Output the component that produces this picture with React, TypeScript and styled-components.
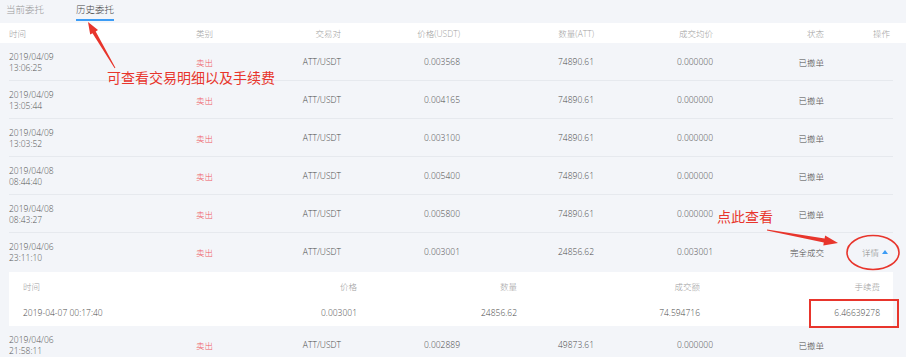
import styled, { createGlobalStyle } from 'styled-components';

const GlobalStyle = createGlobalStyle`
  html, body {
    margin: 0;
    padding: 0;
    background: #f3f5f9;
    font-family: "Open Sans", "Noto Sans CJK SC", sans-serif;
    color: #333;
  }
`;

const COLS = '141px 63px 128px 119px 134px 119px 111px 66px';
const DETAIL_COLS = '177px 157px 160px 183px 180px';

type Order = {
  date: string;
  time: string;
  price: string;
  amount: string;
  avg: string;
  status: string;
  open?: boolean;
};

const orders: Order[] = [
  { date: '2019/04/09', time: '13:06:25', price: '0.003568', amount: '74890.61', avg: '0.000000', status: '已撤单' },
  { date: '2019/04/09', time: '13:05:44', price: '0.004165', amount: '74890.61', avg: '0.000000', status: '已撤单' },
  { date: '2019/04/09', time: '13:03:52', price: '0.003100', amount: '74890.61', avg: '0.000000', status: '已撤单' },
  { date: '2019/04/08', time: '08:44:40', price: '0.005400', amount: '74890.61', avg: '0.000000', status: '已撤单' },
  { date: '2019/04/08', time: '08:43:27', price: '0.005800', amount: '74890.61', avg: '0.000000', status: '已撤单' },
  { date: '2019/04/06', time: '23:11:10', price: '0.003001', amount: '24856.62', avg: '0.003001', status: '完全成交', open: true },
  { date: '2019/04/06', time: '21:58:11', price: '0.002889', amount: '49873.61', avg: '0.000000', status: '已撤单' },
];

export default function App() {
  return (
    <Page>
      <GlobalStyle />
      <Tabs>
        <Tab>当前委托</Tab>
        <Tab $active>历史委托</Tab>
      </Tabs>

      <HeaderBar>
        <Grid>
          <HeadCell $left>时间</HeadCell>
          <HeadCell>类别</HeadCell>
          <HeadCell>交易对</HeadCell>
          <HeadCell>价格(USDT)</HeadCell>
          <HeadCell>数量(ATT)</HeadCell>
          <HeadCell>成交均价</HeadCell>
          <HeadCell>状态</HeadCell>
          <HeadCell>操作</HeadCell>
        </Grid>
      </HeaderBar>

      <Body>
        {orders.map((o, i) => (
          <div key={i}>
            <Row $noBorder={o.open}>
              <TimeCell>
                {o.date}
                <br />
                {o.time}
              </TimeCell>
              <Cell $sell>卖出</Cell>
              <Cell>ATT/USDT</Cell>
              <Cell>{o.price}</Cell>
              <Cell>{o.amount}</Cell>
              <Cell>{o.avg}</Cell>
              <Cell>{o.status}</Cell>
              <Cell>
                {o.open && (
                  <DetailLink>
                    详情 <Caret />
                  </DetailLink>
                )}
              </Cell>
            </Row>
            {o.open && (
              <Detail>
                <DetailRow>
                  <DetailHead $left>时间</DetailHead>
                  <DetailHead>价格</DetailHead>
                  <DetailHead>数量</DetailHead>
                  <DetailHead>成交额</DetailHead>
                  <DetailHead>手续费</DetailHead>
                </DetailRow>
                <DetailRow>
                  <DetailCell $left>2019-04-07 00:17:40</DetailCell>
                  <DetailCell>0.003001</DetailCell>
                  <DetailCell>24856.62</DetailCell>
                  <DetailCell>74.594716</DetailCell>
                  <DetailCell>6.46639278</DetailCell>
                </DetailRow>
              </Detail>
            )}
          </div>
        ))}
      </Body>

      <Note $x={107} $y={69}>可查看交易明细以及手续费</Note>
      <Note $x={717} $y={208}>点此查看</Note>
      <Marks width="906" height="357" viewBox="0 0 906 357">
        <polygon
          points="88,22 98,30 95.7,31.4 115.4,67.8 114.6,68.2 92.5,33.2 90.2,34.6"
          fill="#e8352c"
        />
        <polygon
          points="838,243 823.3,245.4 823.8,242.5 766.9,230.6 767.1,229.4 824.6,238.5 825.1,235.6"
          fill="#e8352c"
        />
        <ellipse cx="873" cy="252.5" rx="26" ry="17" fill="none" stroke="#e8352c" strokeWidth="1.6" />
        <rect x="810" y="300" width="88" height="27" fill="none" stroke="#e8352c" strokeWidth="2" />
      </Marks>
    </Page>
  );
}

const Page = styled.div`
  position: relative;
  width: 906px;
  height: 357px;
  overflow: hidden;
`;

const Tabs = styled.div`
  display: flex;
  gap: 32px;
  height: 23px;
  padding-left: 6px;
`;

const Tab = styled.div<{ $active?: boolean }>`
  font-size: 9.5px;
  line-height: 19px;
  font-weight: 300;
  color: ${(p) => (p.$active ? '#444' : '#999')};
  border-bottom: 2px solid ${(p) => (p.$active ? '#3c9cf5' : 'transparent')};
  height: 19px;
`;

const HeaderBar = styled.div`
  background: #fff;
  height: 20px;
  display: flex;
  align-items: center;
`;

const Grid = styled.div`
  display: grid;
  grid-template-columns: ${COLS};
  margin-left: 9px;
  width: 884px;
`;

const HeadCell = styled.div<{ $left?: boolean }>`
  font-size: 8.5px;
  font-weight: 300;
  color: #a0a0a0;
  text-align: ${(p) => (p.$left ? 'left' : 'right')};
`;

const Body = styled.div`
  margin-left: 9px;
  width: 884px;
`;

const Row = styled.div<{ $noBorder?: boolean }>`
  display: grid;
  grid-template-columns: ${COLS};
  align-items: center;
  height: 38px;
  box-sizing: border-box;
  border-bottom: 1px solid ${(p) => (p.$noBorder ? 'transparent' : '#e6e9ee')};
`;

const Cell = styled.div<{ $sell?: boolean }>`
  font-size: 8.5px;
  font-weight: 300;
  text-align: right;
  color: ${(p) => (p.$sell ? '#ef5a64' : '#4a4a4a')};
`;

const TimeCell = styled.div`
  font-size: 8.5px;
  font-weight: 300;
  line-height: 11px;
  color: #555;
`;

const DetailLink = styled.span`
  color: #888;
  display: inline-flex;
  align-items: center;
  gap: 3px;
  padding-right: 2px;
`;

const Caret = styled.span`
  width: 0;
  height: 0;
  border-left: 3.5px solid transparent;
  border-right: 3.5px solid transparent;
  border-bottom: 4px solid #3c9cf5;
`;

const Detail = styled.div`
  background: #fff;
  margin-top: 1px;
  padding: 0 13px 0 14px;
  height: 54px;
  display: flex;
  flex-direction: column;
`;

const DetailRow = styled.div`
  display: grid;
  grid-template-columns: ${DETAIL_COLS};
  align-items: center;
  height: 27px;
`;

const DetailHead = styled.div<{ $left?: boolean }>`
  font-size: 8.5px;
  font-weight: 300;
  color: #a0a0a0;
  text-align: ${(p) => (p.$left ? 'left' : 'right')};
`;

const DetailCell = styled.div<{ $left?: boolean }>`
  font-size: 8.5px;
  font-weight: 300;
  color: #4a4a4a;
  text-align: ${(p) => (p.$left ? 'left' : 'right')};
`;

const Note = styled.div<{ $x: number; $y: number }>`
  position: absolute;
  left: ${(p) => p.$x}px;
  top: ${(p) => p.$y}px;
  font-size: 14px;
  line-height: 18px;
  color: #e8352c;
  white-space: nowrap;
`;

const Marks = styled.svg`
  position: absolute;
  left: 0;
  top: 0;
  pointer-events: none;
`;
